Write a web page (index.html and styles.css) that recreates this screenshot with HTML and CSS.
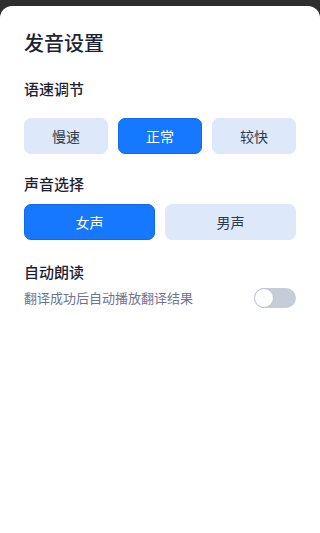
FILE: index.html
```html
<!DOCTYPE html>
<html lang="zh-CN">
<head>
<meta charset="utf-8">
<meta name="viewport" content="width=device-width, initial-scale=1">
<title>发音设置</title>
<link rel="stylesheet" href="styles.css">
</head>
<body>
<div class="sheet">
  <h1 class="title">发音设置</h1>
  <div class="label label-speed">语速调节</div>
  <div class="options three">
    <button class="opt">慢速</button>
    <button class="opt active">正常</button>
    <button class="opt">较快</button>
  </div>
  <div class="label label-voice">声音选择</div>
  <div class="options two">
    <button class="opt active">女声</button>
    <button class="opt">男声</button>
  </div>
  <div class="label label-auto">自动朗读</div>
  <div class="row">
    <span class="desc">翻译成功后自动播放翻译结果</span>
    <span class="switch"><span class="thumb"></span></span>
  </div>
</div>
</body>
</html>
```
FILE: styles.css
```css
* {
  box-sizing: border-box;
}
html, body {
  margin: 0;
  padding: 0;
  background: #2e2e2e;
  overflow: hidden;
}
body {
  font-family: "Noto Sans CJK SC", "Noto Sans", sans-serif;
  height: 100vh;
  padding-top: 6px;
}
.sheet {
  height: 100%;
  width: 100%;
  background: #ffffff;
  border-radius: 12px 12px 0 0;
  padding: 23px 24px 0;
}
.title {
  margin: 0;
  font-size: 20px;
  line-height: 28px;
  font-weight: 500;
  color: #1d2233;
}
.label {
  font-size: 15px;
  line-height: 21px;
  font-weight: 500;
  color: #1d2233;
}
.label-speed { margin-top: 21px; }
.label-voice { margin-top: 19px; }
.label-auto { margin-top: 21px; }
.options {
  display: grid;
  gap: 10px;
}
.options.three {
  grid-template-columns: repeat(3, minmax(0, 1fr));
  margin-top: 19px;
}
.options.two {
  grid-template-columns: repeat(2, minmax(0, 1fr));
  margin-top: 10px;
}
.opt {
  height: 36px;
  border: 1px solid #dde9fb;
  border-radius: 7px;
  background: #dde9fb;
  color: #333846;
  font-family: inherit;
  font-size: 14px;
  padding: 0;
}
.opt.active {
  background: #1677ff;
  border-color: #0f6ae6;
  color: #ffffff;
}
.row {
  margin-top: 6px;
  display: flex;
  align-items: center;
  justify-content: space-between;
}
.desc {
  font-size: 13px;
  line-height: 18px;
  color: #6e7391;
}
.switch {
  width: 42px;
  height: 20px;
  border-radius: 10px;
  background: #c5ced8;
  display: flex;
  align-items: center;
  flex-shrink: 0;
}
.thumb {
  width: 20px;
  height: 20px;
  border-radius: 50%;
  background: #ffffff;
  border: 1px solid #b9c3cf;
}
```
